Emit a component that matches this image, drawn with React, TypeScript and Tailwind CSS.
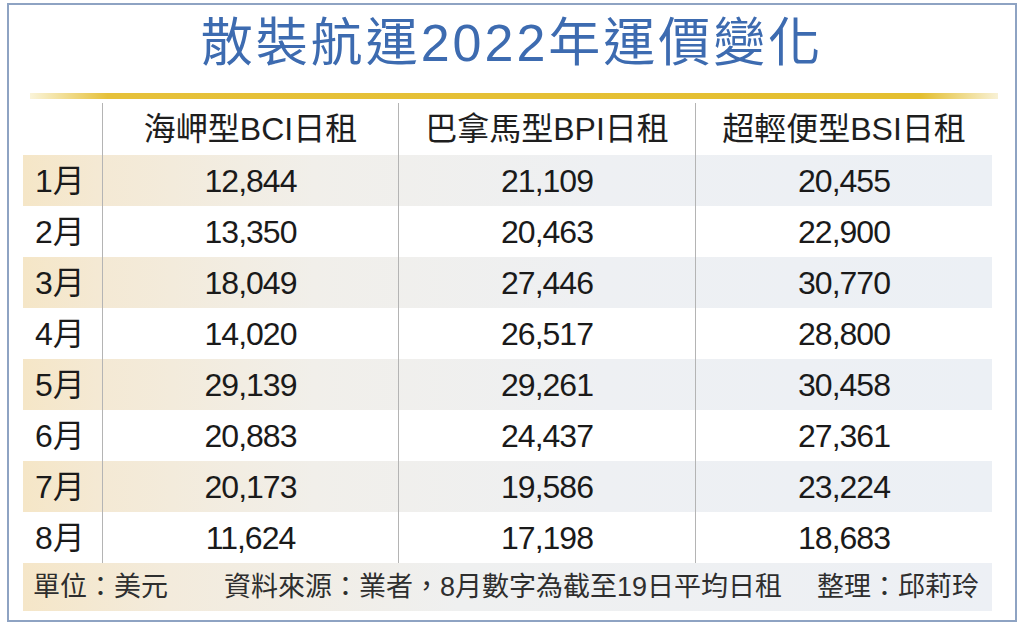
const rows = [
  { m: '1', a: '12,844', b: '21,109', c: '20,455' },
  { m: '2', a: '13,350', b: '20,463', c: '22,900' },
  { m: '3', a: '18,049', b: '27,446', c: '30,770' },
  { m: '4', a: '14,020', b: '26,517', c: '28,800' },
  { m: '5', a: '29,139', b: '29,261', c: '30,458' },
  { m: '6', a: '20,883', b: '24,437', c: '27,361' },
  { m: '7', a: '20,173', b: '19,586', c: '23,224' },
  { m: '8', a: '11,624', b: '17,198', c: '18,683' },
];

const headers = ['海岬型BCI日租', '巴拿馬型BPI日租', '超輕便型BSI日租'];

export default function App() {
  return (
    <div className="w-[1024px] h-[628px] bg-white pt-[3px] pl-[7px] font-['Liberation_Sans','Noto_Sans_CJK_TC',sans-serif]">
      <div className="w-[1010px] h-[619px] border-2 border-[#8ea3c3] flex flex-col">
        {/* Title */}
        <div className="h-[76px] flex items-center justify-center">
          <h1 className="text-[52px] leading-none tracking-[3px] text-[#3d6bb0]">
            散裝航運2022年運價變化
          </h1>
        </div>

        {/* Gold rule */}
        <div className="mt-[12px] ml-[21px] mr-[17px] h-[6px] bg-[linear-gradient(to_right,#faf4da,#e6c13a_8%,#e4bf2f_92%,#f8f1d6)]" />

        {/* Table */}
        <div className="mt-[4px] ml-[14px] w-[969px]">
          <div className="grid grid-cols-[79px_296px_297px_297px] h-[52px]">
            <div />
            {headers.map((h) => (
              <div
                key={h}
                className="border-l border-[#b4b4b4] flex items-center justify-center text-[32px] leading-none text-[#1e1e1e]"
              >
                {h}
              </div>
            ))}
          </div>

          {rows.map((r, i) => (
            <div
              key={r.m}
              className={
                i % 2 === 0
                  ? 'grid grid-cols-[79px_296px_297px_297px] h-[51px] bg-[linear-gradient(to_right,#f5e6c7,#f4e9d4_8%,#f1efea_30%,#eef0f3_60%,#ecf0f5)]'
                  : 'grid grid-cols-[79px_296px_297px_297px] h-[51px]'
              }
            >
              <div className="flex items-center pl-[12px] text-[32px] leading-none text-[#1a1a1a]">
                {r.m}月
              </div>
              {[r.a, r.b, r.c].map((v, j) => (
                <div
                  key={j}
                  className="border-l border-[#b4b4b4] flex items-center justify-center text-[32px] leading-none tracking-[-1px] text-[#1a1a1a]"
                >
                  {v}
                </div>
              ))}
            </div>
          ))}

          {/* Footer */}
          <div className="h-[48px] flex items-center pl-[10px] text-[27px] leading-none text-[#2e2e2e] bg-[linear-gradient(to_right,#f5e6c8,#f3ebdc_15%,#eff0f0_45%,#edf0f5)]">
            <span>單位：美元</span>
            <span className="ml-[56px]">資料來源：業者，8月數字為截至19日平均日租</span>
            <span className="ml-[35px]">整理：邱莉玲</span>
          </div>
        </div>
      </div>
    </div>
  );
}
